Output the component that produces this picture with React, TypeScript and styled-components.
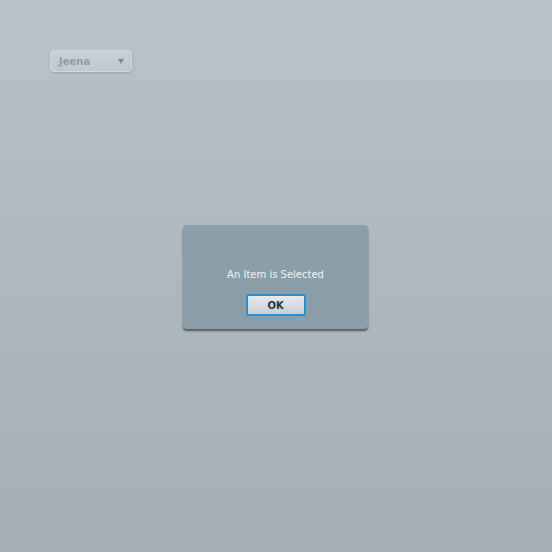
import React from "react";
import styled, { createGlobalStyle } from "styled-components";

const Global = createGlobalStyle`
  html, body { margin: 0; padding: 0; }
  body {
    width: 552px;
    height: 552px;
    overflow: hidden;
    font-family: "DejaVu Sans", Verdana, sans-serif;
  }
`;

const Page = styled.div`
  width: 552px;
  height: 552px;
  background: linear-gradient(to bottom, #b8c3c8 0%, #a4aeb3 100%);
  display: flex;
  flex-direction: column;
  box-sizing: border-box;
  padding: 50px 0 0 50px;
  position: relative;
`;

const Dropdown = styled.div`
  width: 82px;
  height: 22px;
  box-sizing: border-box;
  border-radius: 4px;
  border: 1px solid #d0d8db;
  background: linear-gradient(to bottom, #c8d1d5, #bec8cc);
  box-shadow: 0 1px 2px rgba(0, 0, 0, 0.15);
  display: flex;
  align-items: stretch;
`;

const DropLabel = styled.div`
  flex: 1;
  display: flex;
  align-items: center;
  padding-left: 8px;
  font-size: 10px;
  font-weight: bold;
  color: #909ca1;
  filter: blur(0.4px);
`;

const DropButton = styled.div`
  width: 20px;
  border-left: 1px solid #c4cdd1;
  display: flex;
  align-items: center;
  justify-content: center;
`;

const Arrow = styled.div`
  width: 0;
  height: 0;
  border-left: 3.5px solid transparent;
  border-right: 3.5px solid transparent;
  border-top: 5px solid #7f8a90;
  margin-top: 1px;
`;

const Overlay = styled.div`
  position: absolute;
  left: 183px;
  top: 225px;
`;

const Dialog = styled.div`
  width: 185px;
  height: 104px;
  box-sizing: border-box;
  background: #8a9ea8;
  border-radius: 4px;
  box-shadow: 0 2px 2px rgba(30, 40, 45, 0.65);
  display: flex;
  flex-direction: column;
  align-items: center;
  padding-top: 44px;
`;

const Message = styled.div`
  font-size: 10px;
  color: #f2f5f6;
  line-height: 12px;
`;

const OkButton = styled.button`
  margin-top: 13px;
  width: 60px;
  height: 22px;
  box-sizing: border-box;
  border: 2px solid #1f8fd8;
  border-radius: 3px;
  background: linear-gradient(to bottom, #e6eaec 0%, #c8ced2 100%);
  font-family: "DejaVu Sans", Verdana, sans-serif;
  font-size: 10px;
  font-weight: bold;
  color: #1d3440;
  padding: 0;
  display: flex;
  align-items: center;
  justify-content: center;
`;

export default function App() {
  return (
    <>
      <Global />
      <Page>
        <Dropdown>
          <DropLabel>Jeena</DropLabel>
          <DropButton>
            <Arrow />
          </DropButton>
        </Dropdown>
        <Overlay>
          <Dialog>
            <Message>An Item is Selected</Message>
            <OkButton>OK</OkButton>
          </Dialog>
        </Overlay>
      </Page>
    </>
  );
}
